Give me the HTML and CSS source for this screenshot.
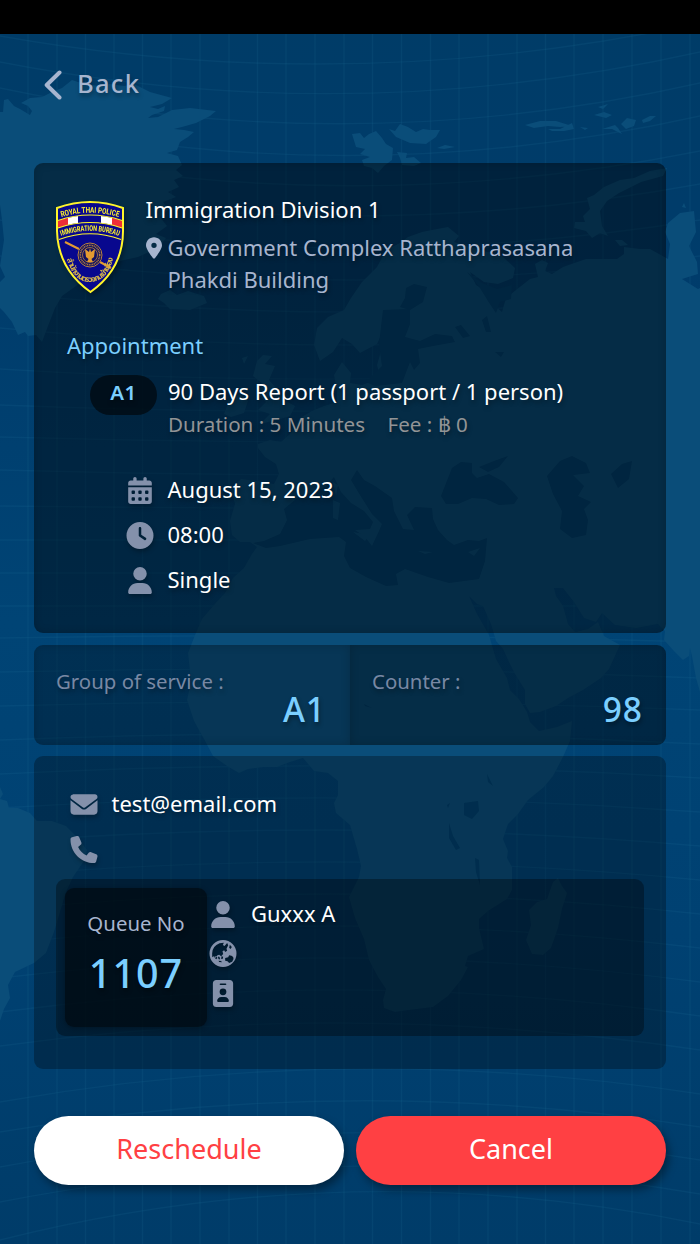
FILE: index.html
```html
<!DOCTYPE html>
<html lang="en">
<head>
<meta charset="utf-8">
<meta name="viewport" content="width=device-width, initial-scale=1">
<title>Appointment</title>
<link rel="stylesheet" href="styles.css">
</head>
<body>
<svg class="defs" width="0" height="0" aria-hidden="true">
  <symbol id="i-pin" viewBox="0 0 384 512"><path d="M215.7 499.2C267 435 384 279.4 384 192C384 86 298 0 192 0S0 86 0 192c0 87.4 117 243 168.3 307.2c12.3 15.3 35.1 15.3 47.4 0zM192 128a64 64 0 1 1 0 128 64 64 0 1 1 0-128z"/></symbol>
  <symbol id="i-calendar" viewBox="0 0 448 512"><path fill-rule="evenodd" d="M128 0c17.700 0 32 14.300 32 32V64H288V32c0-17.700 14.300-32 32-32s32 14.300 32 32V64h48c26.500 0 48 21.500 48 48v48H0V112C0 85.500 21.500 64 48 64H96V32c0-17.700 14.300-32 32-32zM0 192H448V464c0 26.500-21.500 48-48 48H48c-26.500 0-48-21.500-48-48V192zM80 256h32a16 16 0 0 1 16 16v32a16 16 0 0 1-16 16H80a16 16 0 0 1-16-16v-32a16 16 0 0 1 16-16zm128 0h32a16 16 0 0 1 16 16v32a16 16 0 0 1-16 16h-32a16 16 0 0 1-16-16v-32a16 16 0 0 1 16-16zm128 0h32a16 16 0 0 1 16 16v32a16 16 0 0 1-16 16h-32a16 16 0 0 1-16-16v-32a16 16 0 0 1 16-16zM80 384h32a16 16 0 0 1 16 16v32a16 16 0 0 1-16 16H80a16 16 0 0 1-16-16v-32a16 16 0 0 1 16-16zm128 0h32a16 16 0 0 1 16 16v32a16 16 0 0 1-16 16h-32a16 16 0 0 1-16-16v-32a16 16 0 0 1 16-16zm128 0h32a16 16 0 0 1 16 16v32a16 16 0 0 1-16 16h-32a16 16 0 0 1-16-16v-32a16 16 0 0 1 16-16z"/></symbol>
  <symbol id="i-clock" viewBox="0 0 512 512"><path fill-rule="evenodd" d="M256 0a256 256 0 1 1 0 512A256 256 0 1 1 256 0zM232 120V256c0 8 4 15.500 10.700 20l96 64c11 7.400 25.900 4.400 33.300-6.700s4.400-25.900-6.700-33.300L280 243.200V120c0-13.300-10.700-24-24-24s-24 10.700-24 24z"/></symbol>
  <symbol id="i-user" viewBox="0 0 448 512"><path d="M224 256A128 128 0 1 0 224 0a128 128 0 1 0 0 256zm-45.700 48C79.800 304 0 383.800 0 482.300C0 498.700 13.300 512 29.700 512H418.300c16.400 0 29.700-13.300 29.700-29.700C448 383.800 368.200 304 269.700 304H178.300z"/></symbol>
  <symbol id="i-mail" viewBox="0 0 512 512"><path d="M48 64C21.500 64 0 85.500 0 112c0 15.100 7.100 29.300 19.200 38.400L236.800 313.600c11.400 8.500 27 8.500 38.400 0L492.800 150.400c12.100-9.100 19.200-23.300 19.200-38.400c0-26.500-21.500-48-48-48H48zM0 176V384c0 35.300 28.700 64 64 64H448c35.300 0 64-28.700 64-64V176L294.400 339.200c-22.800 17.100-54 17.100-76.800 0L0 176z"/></symbol>
  <symbol id="i-phone" viewBox="0 0 512 512"><path d="M164.900 24.600c-7.700-18.600-28-28.500-47.400-23.200l-88 24C12.100 30.200 0 46 0 64C0 311.400 200.600 512 448 512c18 0 33.800-12.100 38.600-29.500l24-88c5.300-19.400-4.600-39.700-23.200-47.400l-96-40c-16.300-6.800-35.200-2.100-46.300 11.600L304.700 368C234.300 334.700 177.300 277.700 144 207.300L193.300 167c13.700-11.200 18.400-30 11.600-46.300l-40-96z"/></symbol>
  <symbol id="i-globe" viewBox="0 0 81 81"><path fill-rule="evenodd" d="M40.500 0a40.500 40.500 0 1 1 0 81a40.500 40.500 0 1 1 0-81zM8 40Q9 18 30 10L43 8l-3 7 5 3 8-9 3 7-5 10 2 6-6 4-3-5-5 3 2 8-6 7-6-5-5 2-7 8-5-5-4 3zM61 14l6 7-4 6-4-4zM13 51l7-2 4 5-4 4zM28 49l4 6-3 4-4-6zM36 49l5 1-1 6-5 1zM27 62l8 1 2 4-8-1zM47 54l9-2 3-6 7 1 5 4 1 6-4 8-9 4-5-5-7-2z"/></symbol>
  <symbol id="i-badge" viewBox="0 0 384 512"><path fill-rule="evenodd" d="M64 0C28.700 0 0 28.700 0 64V448c0 35.300 28.700 64 64 64H320c35.300 0 64-28.700 64-64V64c0-35.300-28.700-64-64-64H64zm96 320h64c44.200 0 80 35.800 80 80c0 8.800-7.200 16-16 16H96c-8.800 0-16-7.200-16-16c0-44.200 35.800-80 80-80zm-32-96a64 64 0 1 1 128 0 64 64 0 1 1 -128 0zM144 64h96c8.800 0 16 7.200 16 16s-7.200 16-16 16H144c-8.800 0-16-7.200-16-16s7.200-16 16-16z"/></symbol>
</svg>

<svg class="map" viewBox="0 0 700 1244" aria-hidden="true">
  <defs>
    <linearGradient id="sea" x1="0" y1="0" x2="0" y2="1">
      <stop offset="0" stop-color="#003c67"/><stop offset=".22" stop-color="#003c6b"/>
      <stop offset=".5" stop-color="#004475"/><stop offset=".75" stop-color="#004172"/><stop offset="1" stop-color="#003c69"/>
    </linearGradient>
  </defs>
  <rect width="700" height="1244" fill="url(#sea)"/>
  <path class="grid" d="M28 34V1244M57 34V1244M85.500 34V1244M114 34V1244M142.500 34V1244M171 34V1244M200 34V1244M229 34V1244M257.500 34V1244M286 34V1244M315 34V1244M344 34V1244M372.500 34V1244M401.500 34V1244M430.500 34V1244M459 34V1244M488 34V1244M517 34V1244M545.500 34V1244M574 34V1244M603 34V1244M632 34V1244M661 34V1244M690 34V1244"/>
  <path class="grid" d="M0 20Q350 56 700-6M0 36Q350 98 700 23M0 62Q350 130 700 52M0 88Q350 162 700 83M0 118Q350 194 700 116M0 150Q350 221 700 151M0 184Q350 248 700 184M0 220Q350 276 700 220M0 256Q350 304 700 256M0 292Q350 332 700 292M0 328Q350 362 700 328M0 369Q350 391 700 365M0 405Q350 419 700 401M0 437Q350 447 700 437M0 470Q350 480 700 470M0 506Q350 510 700 508M0 540H700M0 573H700M0 606H700M0 638Q350 632 700 642M0 672Q350 664 700 678M0 706Q350 696 700 710M0 740Q350 726 700 744M0 774Q350 756 700 778M0 808Q350 786 700 812M0 842Q350 816 700 846M0 876Q350 846 700 880M0 910Q350 876 700 914M0 944Q350 906 700 948M0 978Q350 936 700 982M0 1012Q350 966 700 1016M0 1046Q350 998 700 1050M0 1102Q350 1040 700 1094M0 1132Q350 1072 700 1127M0 1167Q350 1102 700 1160M0 1202Q350 1134 700 1194M0 1240Q350 1152 700 1224"/>
  <path class="land" d="M0 112L3 112 4 100 8 99 14 106 20 109 30 115 32 111 28 106 21 103 30 98 42 97 52 92 62 88 72 80 84 84 100 86 110 84 124 86 134 84 142 88 150 92 172 98 162 104 150 107 158 109 165 106 164 111 152 115 148 118 158 117 172 110 190 108 216 111 210 116 196 123 182 127 174 129 184 130 194 132 188 137 180 142 177 150 167 153 178 156 182 165 176 170 183 176 174 180 179 187 168 192 176 197 163 202 168 210 160 217 167 226 156 234 166 238 158 248 138 257 120 261 105 270 90 276 76 286 62 296 55 308 48 326 42 342 36 335 28 336 25 332 18 335 12 322 4 312 0 308V282L5 277 0 266 4 240 2 220 0 205z"/>
  <path class="land" d="M161 294L170 290 177 295 188 291 204 296 207 303 190 310 170 309 164 303 158 299zM352 134L360 133 364 138 369 134 376 131 382 138 386 144 393 148 392 160 384 166 378 173 372 168 364 166 362 160 370 157 360 154 365 149 356 147zM389 129L395 131 400 124 408 127 416 132 423 129 430 130 440 130 436 137 426 144 410 143 396 137zM397 152L407 153 406 158 414 157 421 163 414 166 402 165 400 158zM525 125L540 121 556 121 572 126 560 127 548 126 534 128zM548 129L560 129 572 123 574 129 564 131 552 131zM580 127L588 128 585 130zM602 129L615 125 618 128 622 134 612 129zM621 124L627 118 636 120 634 126 626 129zM642 120L650 116 656 116 650 121 643 123zM594 115L604 112 612 115 606 118zM598 107L608 104 603 109zM437 148L445 145 455 147 444 149z"/>
  <path class="land" d="M667 168L650 171 634 178 620 180 604 187 594 195 587 198 590 209 583 216 585 222 575 222 574 228 586 231 592 238 600 233 608 236 602 226 600 211 607 201 619 193 641 182 663 176zM615 240L622 240 628 245 620 246zM682 207L684 203 686 208z"/>
  <path class="land" d="M320 361L314 345 317 328 328 317 344 310 351 298 362 282 377 267 386 250 400 243 408 237 422 232 432 230 448 227 459 236 454 242 470 247 502 256 515 268 513 278 498 284 484 282 470 272 476 285 488 292 494 305 502 312 506 298 516 290 530 279 538 277 535 264 542 260 548 263 545 271 552 274 563 267 586 259 600 259 617 259 624 254 624 247 640 249 650 249 668 259 670 244 665 232 668 223 680 213 694 211 696 232 689 246 697 262 698 274 682 279 698 289 700 288V692L696 678 692 656 690 648 689 656 683 660 673 650 664 640 665 631 658 624 636 628 615 625 602 613 596 622 584 618 574 602 563 588 554 588 556 596 563 606 568 624 575 632 588 629 598 622 604 636 620 645 609 669 601 678 583 690 568 698 556 706 540 712 530 713 525 704 525 690 515 674 509 662 503 649 496 641 491 624 483 606 477 604 469 596 477 614 484 626 489 635 496 659 507 678 510 690 519 699 527 712 530 722 539 731 557 727 572 721 570 741 563 757 553 776 544 787 528 800 518 814 508 824 503 839 508 851 507 858 512 867 512 890 507 899 488 911 479 919 479 928 484 949 468 956 465 966 468 967 461 980 448 996 433 1007 409 1010 395 1012 384 1008 383 1000 386 989 378 977 369 960 364 939 355 918 349 897 359 877 361 866 357 849 350 825 336 813 334 803 338 795 338 781 328 773 314 771 303 758 290 762 277 767 264 767 248 769 239 773 227 766 213 756 204 739 194 721 187 700 191 681 188 653 195 635 202 619 214 605 225 593 233 578 244 568 252 554 257 547 250 542 240 542 232 535 230 521 235 504 231 489 241 479 257 481 274 484 279 474 276 464 265 457 258 448 258 444 270 440 281 442 292 432 300 418 312 411 324 406 337 402 337 391 334 375 342 362 351 373 350 383 362 385 380 378 377 365 383 344 383 333 387 323 377 344 360 353 352 344 342 338 333 352z"/>
  <path class="land" d="M257 361L263 355 272 356 265 364 275 366 269 380 278 390 284 400 295 406 290 416 277 420 260 424 270 414 258 410 266 402 257 394 263 384 253 376zM229 401L240 394 248 401 244 413 231 417 224 414zM248 356L244 364 242 358zM553 882L558 878 562 886 567 893 562 909 558 928 551 948 543 955 532 954 526 940 531 925 529 910 537 902 547 899z"/>
  <path class="land" d="M0 787L3 794 0 799 7 801 9 808 18 808 30 813 37 821 52 821 66 826 78 838 87 850 84 861 73 877 66 892 60 912 54 932 46 953 34 963 15 972 8 985 10 998 4 1009 0 1021z"/>
  <path class="water" d="M253 543L264 541 280 534 287 520 284 509 300 496 312 492 325 487 334 477 341 492 351 503 364 511 373 522 370 529 355 530 365 537 372 546 379 531 382 524 372 514 360 495 351 480 357 470 364 480 375 486 392 498 394 511 403 529 414 530 407 515 415 507 432 508 433 519 438 530 447 540 454 545 468 540 479 541 487 538 485 561 479 579 449 583 428 577 405 569 396 574 398 585 386 586 366 577 350 568 344 556 346 542 339 537 310 539 280 546 266 548zM441 496L452 468 461 462 472 463 472 473 477 478 489 474 504 482 518 498 514 504 499 505 486 499 472 498 458 504 446 504zM479 467L494 461 508 456 499 467 488 472zM547 476L560 461 572 456 586 463 590 473 573 475 584 486 578 496 591 502 584 509 588 520 586 535 572 538 560 529 562 511 553 494zM611 474L622 464 632 461 629 479 618 488zM383 310L410 309 410 324 405 337 420 341 435 334 452 336 455 342 433 346 418 349 420 363 414 370 410 362 402 383 375 386 366 382 382 366 379 344zM406 288L414 284 427 287 423 302 410 310 400 307 405 298zM467 272L482 283 497 289 512 285 511 299 500 302 496 313 488 301 480 288zM455 327L461 325 470 336 463 338zM482 320L487 316 491 332 486 332zM495 352L504 352 501 357zM464 803L478 801 479 811 472 819 464 815zM449 823L453 836 460 848 456 850 449 838zM475 858L479 860 480 885 476 872zM487 774L493 786 488 782zM447 805L450 803 448 808zM364 704L372 708 365 706z"/>
  <path class="land" d="M333 500L340 503 338 520 333 518zM333 482L338 485 336 496zM418 551L433 552 425 554zM468 552L480 548 474 556zM353 532L370 535 365 541z"/>
</svg>

<div class="statusbar"></div>
<main class="page">
  <a class="back">
    <svg class="back-arrow" viewBox="0 0 18 30"><path d="M15.500 2.500L2.700 15 15.500 27.500"/></svg>
    <span>Back</span>
  </a>

  <section class="card card-main">
    <div class="office">
      <svg class="crest" viewBox="0 0 68 92">
        <defs>
          <path id="arc1" d="M4 16.500Q34 7 64 16.500"/>
          <path id="arc2" d="M3.500 35.500Q34 24 64.500 35.500"/>
          <path id="arc3" d="M10 54Q16 81 34 81Q52 81 58 54"/>
        </defs>
        <path d="M1 7Q34-5 67 7V30Q67 68 34.500 91Q2 68 1 30z" fill="#08088e" stroke="#fff52a" stroke-width="2"/>
        <path d="M2 20Q7 18 12 17V24Q7 25 2 27z" fill="#ed2f38"/><path d="M12 17Q17 15.500 22 15V22Q17 22.500 12 24z" fill="#fff"/>
        <path d="M66 20Q61 18 56 17V24Q61 25 66 27z" fill="#ed2f38"/><path d="M56 17Q51 15.500 45 15V22Q51 22.500 56 24z" fill="#fff"/>
        <path d="M2 19.500Q34 8.500 66 19.500M2 27Q34 16 66 27M3 38.500Q34 27 65 38.500" fill="none" stroke="#fff52a" stroke-width="1.200"/>
        <text class="crest-en" font-size="8"><textPath href="#arc1" startOffset="50%" text-anchor="middle" textLength="58" lengthAdjust="spacingAndGlyphs">ROYAL THAI POLICE</textPath></text>
        <text class="crest-en" font-size="7.500"><textPath href="#arc2" startOffset="50%" text-anchor="middle" textLength="59" lengthAdjust="spacingAndGlyphs">IMMIGRATION BUREAU</textPath></text>
        <path d="M9 41L23 48M44 61L55 67" stroke="#e39a31" stroke-width="2"/>
        <circle cx="34" cy="54" r="12" fill="#10105e" stroke="#b78142" stroke-width="1"/>
        <circle cx="34" cy="54" r="9.700" fill="none" stroke="#b78142" stroke-width="1.600" stroke-dasharray="1 .7"/>
        <circle cx="34" cy="54" r="7.500" fill="none" stroke="#b78142" stroke-width=".8"/>
        <path d="M34 47L35 51 39 48 38 56 35.500 58 37 61H31L32.500 58 30 56 29 48 33 51z" fill="#e39a31"/>
        <text class="crest-th" font-size="8"><textPath href="#arc3" startOffset="50%" text-anchor="middle" textLength="72">สำนักงานตรวจคนเข้าเมือง</textPath></text>
      </svg>
      <div class="office-text">
        <div class="office-name">Immigration Division 1</div>
        <div class="office-place">
          <svg class="pin"><use href="#i-pin"/></svg>
          <span>Government Complex Ratthaprasasana<br>Phakdi Building</span>
        </div>
      </div>
    </div>
    <h2 class="heading">Appointment</h2>
    <div class="service">
      <span class="pill">A1</span>
      <div>
        <div class="service-name">90 Days Report (1 passport / 1 person)</div>
        <div class="service-meta"><span>Duration : 5 Minutes</span><span class="fee">Fee : ฿ 0</span></div>
      </div>
    </div>
    <ul class="facts">
      <li><svg class="icon"><use href="#i-calendar"/></svg><span class="date">August 15, 2023</span></li>
      <li><svg class="icon"><use href="#i-clock"/></svg><span class="time">08:00</span></li>
      <li><svg class="icon"><use href="#i-user"/></svg><span class="kind">Single</span></li>
    </ul>
  </section>

  <section class="split">
    <div class="half half-left"><span class="label group">Group of service :</span><strong class="value">A1</strong></div>
    <div class="half half-right"><span class="label counter">Counter :</span><strong class="value">98</strong></div>
  </section>

  <section class="card card-contact">
    <div class="contact"><svg class="icon"><use href="#i-mail"/></svg><span class="email">test@email.com</span></div>
    <div class="contact"><svg class="icon"><use href="#i-phone"/></svg></div>
    <div class="person">
      <div class="queue"><span class="queue-label">Queue No</span><strong class="queue-no">1107</strong></div>
      <ul class="details">
        <li><svg class="icon"><use href="#i-user"/></svg><span class="name">Guxxx A</span></li>
        <li><svg class="icon"><use href="#i-globe"/></svg></li>
        <li><svg class="icon"><use href="#i-badge"/></svg></li>
      </ul>
    </div>
  </section>

  <div class="actions">
    <button class="btn btn-light">Reschedule</button>
    <button class="btn btn-danger">Cancel</button>
  </div>
</main>
</body>
</html>
```
FILE: styles.css
```css
* { box-sizing: border-box; }

body {
  margin: 0;
  position: relative;
  width: 700px;
  height: 1244px;
  overflow: hidden;
  background: #003c69;
  color: #fff;
  font: 22px/32px "Noto Sans", "Open Sans", sans-serif;
  text-shadow: 1px 3px 4px rgba(0, 0, 0, .35);
  white-space: nowrap;
}

ul { list-style: none; margin: 0; padding: 0; }
.defs { position: absolute; }

.map { position: absolute; inset: 0; width: 700px; height: 1244px; z-index: -1; }
.grid { fill: none; stroke: #2478a0; stroke-opacity: .13; stroke-width: 1.4; }
.land { fill: #0a4d79; }
.water { fill: #00406e; }

.statusbar { height: 34px; background: #000; }
.page { padding: 0 34px; }

.back {
  display: flex;
  align-items: center;
  gap: 15px;
  height: 40px;
  margin: 31px 0 58px 10px;
  color: #a7b5cf;
  font-size: 25.5px;
  font-weight: 500;
  letter-spacing: 1.3px;
}
.back span { margin-top: -4px; }
.back-arrow { width: 18px; height: 30px; fill: none; stroke: #a7b5cf; stroke-width: 4; stroke-linecap: round; stroke-linejoin: round; }

.card { border-radius: 9px; }
.card-main {
  height: 470px;
  padding: 30px 22px 0;
  background: rgba(0, 0, 0, .42);
  box-shadow: inset 0 0 9px rgba(0, 0, 0, .18);
}

.office { display: flex; gap: 21.5px; }
.crest { width: 68px; height: 92px; margin-top: 8px; overflow: visible; filter: drop-shadow(2px 3px 2px rgba(0, 0, 0, .3)); }
.crest text { text-shadow: none; }
.crest-en { fill: #fff52a; font-family: Roboto, sans-serif; font-weight: 700; }
.crest-th { fill: #d5b44b; font-family: "Noto Sans Thai", "Noto Sans", sans-serif; font-weight: 700; }
.office-place { display: flex; gap: 6px; margin-top: 6px; color: #a7b5cf; }
.pin { width: 16px; height: 22px; margin-top: 6px; fill: #a7b5cf; }

.heading { margin: 34px 0 0 11px; color: #7bcfff; font-size: 22px; font-weight: 400; line-height: 32px; }
.service { display: flex; gap: 11px; margin: 14px 0 0 34px; }
.pill {
  width: 67px;
  height: 40px;
  border-radius: 20px;
  background: rgba(0, 0, 0, .58);
  color: #7bcfff;
  font-size: 20.5px;
  font-weight: 600;
  line-height: 35px;
  letter-spacing: .6px;
  text-align: center;
}
.service-meta { margin-top: 1px; color: #929496; font-size: 20.6px; }
.fee { margin-left: 22.5px; }

.icon { width: 28px; height: 27px; fill: #8491ab; filter: drop-shadow(1px 3px 2px rgba(0, 0, 0, .25)); }
.facts { margin: 28px 0 0 70px; }
.facts li { display: flex; align-items: center; gap: 13.5px; height: 45px; }
.facts span { margin-top: -4px; }

.split { display: flex; height: 100px; margin: 12px 0 11px; border-radius: 9px; overflow: hidden; }
.half { display: flex; flex-direction: column; width: 50%; padding: 19.5px 23px 0 22px; box-shadow: inset 0 0 10px rgba(0, 0, 0, .18); }
.half-left { background: rgba(0, 0, 0, .29); padding-right: 24px; }
.half-right { background: rgba(0, 0, 0, .41); }
.label { color: #7888a4; font-size: 20.4px; }
.value { margin-top: -3.5px; align-self: flex-end; color: #7bcfff; font-size: 33.500px; font-weight: 500; letter-spacing: 1px; }

.card-contact { height: 313px; padding: 26px 22px 0; background: rgba(0, 0, 0, .29); }
.contact { display: flex; align-items: center; gap: 14px; height: 45px; padding-left: 13.500px; }
.email { margin-top: -3px; }
.person { display: flex; height: 157px; margin-top: 7px; padding: 9px; border-radius: 9px; background: rgba(0, 0, 0, .33); }
.queue {
  display: flex;
  flex-direction: column;
  align-items: center;
  width: 142px;
  height: 139px;
  padding-top: 19px;
  border-radius: 9px;
  background: rgba(0, 0, 0, .5);
  box-shadow: 0 1px 5px rgba(0, 0, 0, .3);
}
.queue-label { color: #a7b5cf; font-size: 20.4px; }
.queue-no { margin-top: 18px; color: #7bcfff; font-size: 39.500px; font-weight: 500; letter-spacing: 1px; }
.details { padding: 6.5px 0 0 2px; }
.details li { display: flex; align-items: center; gap: 14px; height: 39.500px; }
.name { margin-top: -3px; }

.actions { display: flex; gap: 12px; margin-top: 47px; }
.btn {
  flex: 1;
  height: 69px;
  padding: 0 0 4px;
  border: 0;
  border-radius: 35px;
  font: 27px/32px "Noto Sans", "Open Sans", sans-serif;
  box-shadow: 3px 5px 9px rgba(0, 0, 0, .38);
}
.btn-light { background: #fff; color: #ff4043; }
.btn-danger { background: #ff4043; color: #fff; }
```
